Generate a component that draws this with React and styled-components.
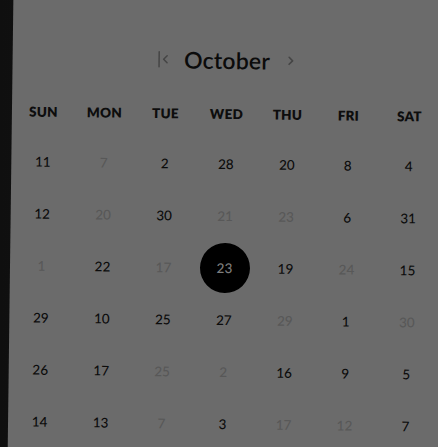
import React from "react";
import styled, { createGlobalStyle } from "styled-components";

const Global = createGlobalStyle`
  html, body { margin: 0; padding: 0; background: #141414; }
  body { font-family: Lato, "Open Sans", sans-serif; }
`;

const Stage = styled.div`
  width: 438px;
  height: 447px;
  overflow: hidden;
  background: linear-gradient(to right, #0f0f0f 0%, #1b1b1b 70%, #242424 100%);
`;

const Panel = styled.div`
  margin: -30px -30px 0 10px;
  width: 458px;
  height: 520px;
  box-sizing: border-box;
  padding-top: 72px;
  background: #6b6b6b;
  transform: rotate(0.72deg);
  transform-origin: 214px 298px;
`;

const Content = styled.div`
  width: 428px;
  display: flex;
  flex-direction: column;
`;

const TitleRow = styled.div`
  height: 36px;
  display: flex;
  align-items: center;
  justify-content: center;
  gap: 15px;
  padding-left: 1px;
`;

const NavButton = styled.span`
  display: flex;
  align-items: center;
  color: #454545;
  width: 12px;
  justify-content: center;
`;

const Month = styled.h1`
  margin: 0;
  font-family: Lato, "Open Sans", sans-serif;
  font-size: 23px;
  font-weight: 600;
  letter-spacing: 0.2px;
  color: #0b0b0b;
`;

const HeaderRow = styled.div`
  margin-top: 26px;
  height: 20px;
  display: grid;
  grid-template-columns: repeat(7, 61px);
  padding-left: 1px;
`;

const HeaderCell = styled.div`
  text-align: center;
  line-height: 20px;
  font-size: 13.5px;
  font-weight: 800;
  color: #0d0d0d;
  letter-spacing: 0.2px;
`;

const Grid = styled.div`
  margin-top: 13.5px;
  display: grid;
  grid-template-columns: repeat(7, 61px);
  grid-auto-rows: 52px;
  padding-left: 1px;
`;

const Cell = styled.div`
  display: flex;
  align-items: center;
  justify-content: center;
`;

const Day = styled.span`
  width: 50px;
  height: 50px;
  border-radius: 50%;
  display: flex;
  align-items: center;
  justify-content: center;
  font-size: 13.5px;
  font-weight: 500;
  color: ${(p) => (p.$selected ? "#7d7d7d" : p.$muted ? "#585858" : "#0c0c0c")};
  background: ${(p) => (p.$selected ? "#000" : "transparent")};
`;

const heads = ["SUN", "MON", "TUE", "WED", "THU", "FRI", "SAT"];

const rows = [
  ["11", "m7", "2", "28", "20", "8", "4"],
  ["12", "m20", "30", "m21", "m23", "6", "31"],
  ["m1", "22", "m17", "s23", "19", "m24", "15"],
  ["29", "10", "25", "27", "m29", "1", "m30"],
  ["26", "17", "m25", "m2", "16", "9", "5"],
  ["14", "13", "m7", "3", "m17", "m12", "7"],
];

const FirstIcon = () => (
  <svg width="12" height="18" viewBox="0 0 12 18" fill="none" stroke="currentColor" strokeWidth="1.5" strokeLinecap="round" strokeLinejoin="round">
    <path d="M1.5 1.5v15" />
    <path d="M9.5 5.5l-3.5 3.5 3.5 3.5" />
  </svg>
);

const NextIcon = () => (
  <svg width="10" height="14" viewBox="0 0 10 14" fill="none" stroke="currentColor" strokeWidth="1.6" strokeLinecap="round" strokeLinejoin="round">
    <path d="M3.5 3.5l3.5 3.5-3.5 3.5" />
  </svg>
);

export default function App() {
  return (
    <>
      <Global />
      <Stage>
        <Panel>
          <Content>
            <TitleRow>
              <NavButton><FirstIcon /></NavButton>
              <Month>October</Month>
              <NavButton><NextIcon /></NavButton>
            </TitleRow>
            <HeaderRow>
              {heads.map((h) => (
                <HeaderCell key={h}>{h}</HeaderCell>
              ))}
            </HeaderRow>
            <Grid>
              {rows.flatMap((r, ri) =>
                r.map((v, ci) => {
                  const muted = v[0] === "m";
                  const sel = v[0] === "s";
                  const n = muted || sel ? v.slice(1) : v;
                  return (
                    <Cell key={`${ri}-${ci}`}>
                      <Day $muted={muted} $selected={sel}>{n}</Day>
                    </Cell>
                  );
                })
              )}
            </Grid>
          </Content>
        </Panel>
      </Stage>
    </>
  );
}
